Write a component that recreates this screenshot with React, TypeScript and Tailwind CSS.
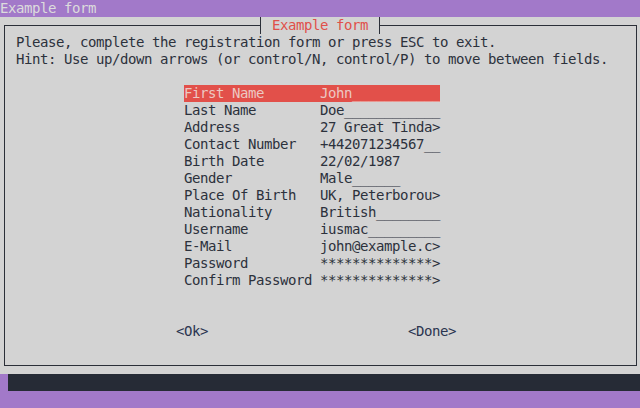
import React from 'react';

const fields: { label: string; value: string }[] = [
  { label: 'First Name', value: 'John___________' },
  { label: 'Last Name', value: 'Doe____________' },
  { label: 'Address', value: '27 Great Tinda>' },
  { label: 'Contact Number', value: '+442071234567__' },
  { label: 'Birth Date', value: '22/02/1987' },
  { label: 'Gender', value: 'Male______' },
  { label: 'Place Of Birth', value: 'UK, Peterborou>' },
  { label: 'Nationality', value: 'British________' },
  { label: 'Username', value: 'iusmac_________' },
  { label: 'E-Mail', value: 'john@example.c>' },
  { label: 'Password', value: '**************>' },
  { label: 'Confirm Password', value: '**************>' },
];

export default function App() {
  return (
    <div
      className="w-[640px] h-[408px] bg-[#a279c9] flex flex-col text-[14px] tracking-[-0.43px] leading-[17px] whitespace-pre overflow-hidden"
      style={{ fontFamily: '"DejaVu Sans Mono", "Liberation Mono", monospace' }}
    >
      {/* title bar */}
      <div className="h-[17px] text-[#dcdcdc]">Example form</div>

      {/* dialog area */}
      <div className="h-[357px] bg-[#d3d3d3] pt-[8px] pl-[4px]">
        <div className="relative w-[633px] h-[341px] border border-[#2b2f38] text-[#2c313c]">
          {/* title in top border */}
          <div className="absolute left-[251px] top-[-9px] h-[17px] flex items-center bg-[#d3d3d3]">
            <div className="w-[8px] h-[17px] flex">
              <div className="w-[4px] h-[1px] mt-[8px] bg-[#2b2f38]" />
              <div className="w-[1px] h-[17px] bg-[#2b2f38]" />
            </div>
            <span className="text-[#e0504a]"> Example form </span>
            <div className="w-[8px] h-[17px] flex">
              <div className="w-[1px] h-[17px] ml-[3px] bg-[#2b2f38]" />
              <div className="w-[4px] h-[1px] mt-[8px] bg-[#2b2f38]" />
            </div>
          </div>

          <div className="pl-[11px] pt-[8px]">
            <div className="h-[17px]">Please, complete the registration form or press ESC to exit.</div>
            <div className="h-[17px]">Hint: Use up/down arrows (or control/N, control/P) to move between fields.</div>
          </div>

          <div className="ml-[179px] mt-[17px] flex flex-col w-[256px]">
            {fields.map((f, i) => (
              <div
                key={f.label}
                className={`h-[17px] flex ${i === 0 ? 'bg-[#e2504a] text-[#ecc8c3]' : ''}`}
              >
                <span className="w-[136px]">{f.label}</span>
                <span className="w-[120px]">{f.value}</span>
              </div>
            ))}
          </div>

          <div className="mt-[34px] h-[17px] flex text-[#2b3550]">
            <span className="ml-[171px] w-[232px]">&lt;Ok&gt;</span>
            <span>&lt;Done&gt;</span>
          </div>
        </div>
      </div>

      {/* status strip */}
      <div className="h-[17px] ml-[8px] bg-[#262b36]" />
    </div>
  );
}
